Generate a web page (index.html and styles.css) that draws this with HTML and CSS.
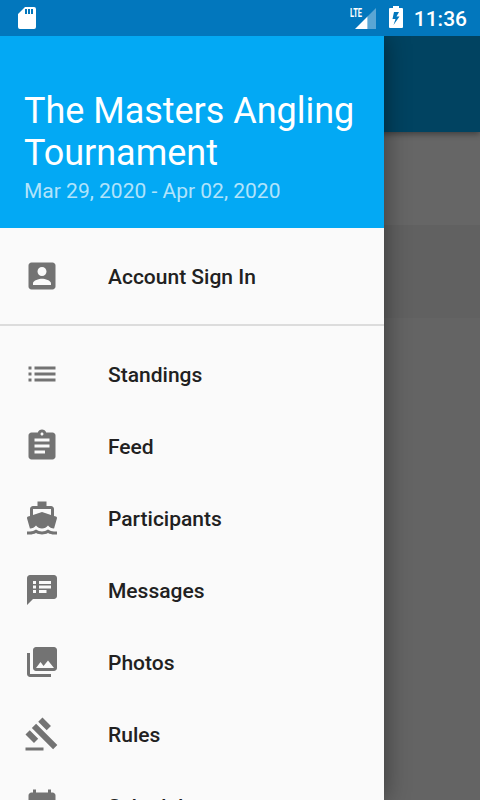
FILE: index.html
```html
<!DOCTYPE html>
<html lang="en">
<head>
    <meta charset="UTF-8">
    <meta name="viewport" content="width=device-width, initial-scale=1.0">
    <title>The Masters Angling Tournament</title>
    <link rel="stylesheet" href="styles.css">
</head>
<body>
    <div class="page">
        <div class="toolbar"></div>
        <div class="row"></div>
        <div class="row row-alt"></div>
    </div>

    <header class="status-bar">
        <svg class="sd-card" width="18" height="22" viewBox="0 0 18 22">
            <path fill-rule="evenodd" d="M7 0h9q2 0 2 2v18q0 2-2 2H2q-2 0-2-2V7zM7 2v5h2V2zm3 0v5h2V2zm3 0v5h2V2z"/>
        </svg>
        <div class="network">
            <span class="lte">LTE</span>
            <svg class="signal" width="21" height="21" viewBox="0 0 21 21">
                <path opacity=".35" d="M12.500 8.500L21 0v21h-8.500z"/>
                <path d="M0 21L12.500 8.500V21z"/>
            </svg>
        </div>
        <svg class="battery" width="14" height="22" viewBox="0 0 14 22">
            <path fill-rule="evenodd" d="M4 0h6v2h3q1 0 1 1v18q0 1-1 1H1q-1 0-1-1V3q0-1 1-1h3zM5 6L3.500 13h3L4.500 19l6-8.500H7.500L10 6z"/>
        </svg>
        <span class="time">11:36</span>
    </header>

    <nav class="drawer">
        <div class="drawer-header">
            <h1>The Masters Angling Tournament</h1>
            <p>Mar 29, 2020 - Apr 02, 2020</p>
        </div>
        <ul class="menu account">
            <li>
                <svg viewBox="0 0 24 24"><path d="M3 5v14c0 1.100.890 2 2 2h14c1.100 0 2-.900 2-2V5c0-1.100-.900-2-2-2H5c-1.110 0-2 .900-2 2zm12 4c0 1.660-1.340 3-3 3s-3-1.340-3-3 1.340-3 3-3 3 1.340 3 3zm-9 8c0-2 4-3.100 6-3.100s6 1.100 6 3.100v1H6v-1z"/></svg>
                <span>Account Sign In</span>
            </li>
        </ul>
        <ul class="menu">
            <li>
                <svg viewBox="0 0 24 24"><path d="M3 13h2v-2H3v2zm0 4h2v-2H3v2zm0-8h2V7H3v2zm4 4h14v-2H7v2zm0 4h14v-2H7v2zM7 7v2h14V7H7z"/></svg>
                <span>Standings</span>
            </li>
            <li>
                <svg viewBox="0 0 24 24"><path d="M19 3h-4.180C14.400 1.840 13.300 1 12 1c-1.300 0-2.400.840-2.820 2H5c-1.100 0-2 .900-2 2v14c0 1.100.900 2 2 2h14c1.100 0 2-.900 2-2V5c0-1.100-.900-2-2-2zm-7 0c.550 0 1 .450 1 1s-.450 1-1 1-1-.450-1-1 .450-1 1-1zm2 14H7v-2h7v2zm3-4H7v-2h10v2zm0-4H7V7h10v2z"/></svg>
                <span>Feed</span>
            </li>
            <li>
                <svg viewBox="0 0 24 24"><path d="M20 21c-1.390 0-2.780-.470-4-1.320-2.440 1.710-5.560 1.710-8 0C6.780 20.530 5.390 21 4 21H2v2h2c1.380 0 2.740-.350 4-.990 2.520 1.290 5.480 1.290 8 0 1.260.650 2.620.990 4 .990h2v-2h-2zM3.950 19H4c1.600 0 3.020-.880 4-2 .980 1.120 2.400 2 4 2s3.020-.880 4-2c.980 1.120 2.400 2 4 2h.050l1.890-6.680c.080-.260.060-.540-.060-.780s-.340-.420-.600-.500L20 10.620V6c0-1.100-.900-2-2-2h-3V1H9v3H6c-1.100 0-2 .900-2 2v4.620l-1.290.420c-.260.080-.480.260-.600.500s-.150.520-.060.780L3.950 19zM6 6h12v3.970L12 8 6 9.970V6z"/></svg>
                <span>Participants</span>
            </li>
            <li>
                <svg viewBox="0 0 24 24"><path d="M20 2H4c-1.100 0-1.990.900-1.990 2L2 22l4-4h14c1.100 0 2-.900 2-2V4c0-1.100-.900-2-2-2zM8 14H6v-2h2v2zm0-3H6V9h2v2zm0-3H6V6h2v2zm7 6h-5v-2h5v2zm3-3h-8V9h8v2zm0-3h-8V6h8v2z"/></svg>
                <span>Messages</span>
            </li>
            <li>
                <svg viewBox="0 0 24 24"><path d="M22 16V4c0-1.100-.900-2-2-2H8c-1.100 0-2 .900-2 2v12c0 1.100.900 2 2 2h12c1.100 0 2-.900 2-2zm-11-4l2.030 2.710L16 11l4 5H8l3-4zM2 6v14c0 1.100.900 2 2 2h14v-2H4V6H2z"/></svg>
                <span>Photos</span>
            </li>
            <li>
                <svg viewBox="0 0 24 24"><path d="M1 21h12v2H1zM5.245 8.070l2.830-2.827 14.140 14.142-2.828 2.828zM12.317 1l5.657 5.656-2.830 2.830-5.654-5.660zM3.825 9.485l5.657 5.657-2.828 2.828-5.657-5.657z"/></svg>
                <span>Rules</span>
            </li>
            <li>
                <svg viewBox="0 0 24 24"><path d="M17 12h-5v5h5v-5zM16 1v2H8V1H6v2H5c-1.110 0-1.990.900-1.990 2L3 19c0 1.100.890 2 2 2h14c1.100 0 2-.900 2-2V5c0-1.100-.900-2-2-2h-1V1h-2zm3 18H5V8h14v11z"/></svg>
                <span>Schedule</span>
            </li>
        </ul>
    </nav>
</body>
</html>
```

FILE: styles.css
```css
* {
    box-sizing: border-box;
}
body {
    font-family: Roboto, "Liberation Sans", sans-serif;
    margin: 0;
    height: 100vh;
    overflow: hidden;
    position: relative;
    background: #646464;
}
h1, p, ul {
    margin: 0;
    padding: 0;
    font-weight: normal;
}

/* dimmed page behind the drawer */
.page {
    padding-top: 36px;
}
.toolbar {
    position: relative;
    height: 96px;
    background: #014361;
    box-shadow: 0 2px 6px rgba(0, 0, 0, 0.4);
}
.row {
    height: 93px;
    background: #666;
}
.row-alt {
    background: #616161;
}

.status-bar {
    position: absolute;
    top: 0;
    left: 0;
    z-index: 2;
    width: 100%;
    height: 36px;
    display: flex;
    align-items: center;
    padding: 0 12px 0 18px;
    background: #0277bd;
    color: #fff;
}
.status-bar svg {
    fill: #fff;
}
.network {
    display: flex;
    align-items: flex-start;
    height: 21px;
    margin-left: auto;
}
.lte {
    width: 15px;
    margin-right: -10px;
    font-size: 12.5px;
    line-height: 10px;
    font-weight: bold;
    transform: scaleX(0.6);
    transform-origin: left;
}
.battery {
    margin: -2px 12px 0 13px;
}
.time {
    font-size: 21px;
    font-weight: 500;
    line-height: 36px;
    padding-top: 2px;
    margin-left: -1px;
    padding-right: 1px;
}

.drawer {
    position: absolute;
    top: 36px;
    bottom: 0;
    left: 0;
    z-index: 1;
    width: 384px;
    overflow: hidden;
    background: #fafafa;
    box-shadow: 0 0 24px rgba(0, 0, 0, 0.45);
}
.drawer-header {
    height: 192px;
    padding: 54px 24px 0;
    background: #03a9f4;
    color: #fff;
}
.drawer-header h1 {
    font-size: 36px;
    line-height: 42px;
    letter-spacing: -0.02px;
}
.drawer-header p {
    font-size: 21px;
    line-height: 25px;
    margin-top: 5px;
    color: rgba(255, 255, 255, 0.7);
}
.menu {
    list-style: none;
    padding: 12px 0;
}
.account {
    border-bottom: 2px solid #dcdcdc;
}
.menu li {
    display: flex;
    align-items: center;
    height: 72px;
    padding-left: 24px;
    font-size: 21px;
    font-weight: 500;
    color: #212121;
}
.menu span {
    padding-top: 2px;
}
.menu svg {
    width: 36px;
    height: 36px;
    margin-right: 48px;
    fill: #737373;
}
```
